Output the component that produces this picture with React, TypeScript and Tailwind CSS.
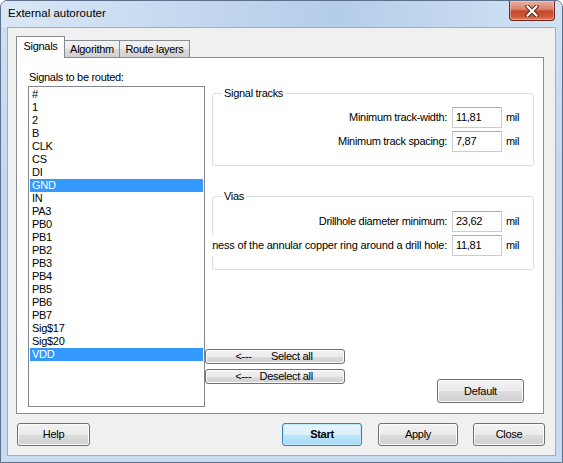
import React from "react";

const signals = [
  "#", "1", "2", "B", "CLK", "CS", "DI", "GND", "IN", "PA3", "PB0", "PB1", "PB2",
  "PB3", "PB4", "PB5", "PB6", "PB7", "Sig$17", "Sig$20", "VDD",
];
const selected = new Set(["GND", "VDD"]);

const btn =
  "flex items-center justify-center rounded-[3px] border border-[#707070] bg-[linear-gradient(#f2f2f2_0%,#ebebeb_50%,#dddddd_50%,#cfcfcf_100%)] shadow-[inset_0_0_0_1px_#fcfcfc] text-black";

function Field({ label, value, clip }: { label: string; value: string; clip?: boolean }) {
  return (
    <div className={`flex items-center h-[21px] ${clip ? "-ml-[1px]" : ""}`}>
      <div
        className={`flex-1 min-w-0 h-[21px] flex items-center justify-end overflow-hidden whitespace-nowrap pr-[5px] ${clip ? "relative bg-white" : ""}`}
      >
        <span className={`shrink-0 ${clip ? "tracking-[-0.2px]" : ""}`}>{label}</span>
      </div>
      <div className="w-[50px] h-[21px] border border-[#c9ccd3] border-t-[#abadb3] bg-white flex items-center pl-[3px]">
        {value}
      </div>
      <div className="w-[31px] pl-[4px]">mil</div>
    </div>
  );
}

function Group({ title, children, pt }: { title: string; children: React.ReactNode; pt: string }) {
  return (
    <div className={`relative ml-[7px] w-[322px] border border-[#d5dfe5] rounded-[3px] ${pt} pb-[13px] flex flex-col gap-[3px]`}>
      <span className="absolute left-[9px] -top-[7px] bg-white px-[2px] leading-[13px]">{title}</span>
      {children}
    </div>
  );
}

export default function App() {
  return (
    <div className="w-[563px] h-[463px] relative overflow-hidden rounded-t-[7px] border border-[#5d7089] bg-[linear-gradient(180deg,#cfe0f3_0%,#c3d7ee_40%,#c8dbf0_100%)] flex flex-col font-['Liberation_Sans',Arial,sans-serif] text-[11px] tracking-[-0.3px] text-black">
      {/* Title bar */}
      <div className="h-[26px] shrink-0 flex items-center pl-[7px] pb-[1px] bg-[linear-gradient(90deg,#dae7f6_0%,#c6daf0_30%,#b4cde9_60%,#c7dbf0_85%,#d2e2f4_100%)]">
        <span className="text-[11.5px] tracking-normal text-black">External autorouter</span>
      </div>
      <div className="absolute top-0 right-[7px] w-[46px] h-[20px] rounded-b-[4px] border border-t-0 border-[#6b2618] bg-[linear-gradient(180deg,#eab0a2_0%,#dc8670_40%,#c44a2f_55%,#cf5634_80%,#e0805c_100%)] shadow-[inset_0_0_0_1px_rgba(255,220,210,0.45)] flex items-center justify-center">
        <svg width="14" height="12" viewBox="0 0 14 12">
          <path d="M2.5 1.5 L11.5 10.5 M11.5 1.5 L2.5 10.5" stroke="#5a1c12" strokeWidth="4" strokeLinecap="square" />
          <path d="M2.5 1.5 L11.5 10.5 M11.5 1.5 L2.5 10.5" stroke="#ffffff" strokeWidth="2.2" strokeLinecap="square" />
        </svg>
      </div>

      {/* Client area */}
      <div className="ml-[6px] w-[549px] h-[429px] border border-[#9aaec6] bg-[#f0f0f0] flex flex-col">
        {/* Tabs */}
        <div className="ml-[8px] mt-[8px] h-[21px] flex items-end">
          <div className="relative z-10 w-[49px] h-[22px] -mb-[1px] border border-b-0 border-[#898c95] bg-white flex items-center justify-center pb-[2px]">
            Signals
          </div>
          <div className="w-[55px] h-[17px] border border-b-0 border-l-0 border-[#898c95] bg-[linear-gradient(#f2f2f2_0%,#ebebeb_50%,#dddddd_50%,#cfcfcf_100%)] flex items-center justify-center">
            Algorithm
          </div>
          <div className="w-[70px] h-[17px] border border-b-0 border-l-0 border-[#898c95] bg-[linear-gradient(#f2f2f2_0%,#ebebeb_50%,#dddddd_50%,#cfcfcf_100%)] flex items-center justify-center">
            Route layers
          </div>
        </div>

        {/* Panel */}
        <div className="ml-[8px] w-[528px] h-[357px] border border-[#898c95] bg-white flex">
          {/* Left column */}
          <div className="ml-[11px] mt-[12px] flex flex-col">
            <div className="h-[14px] leading-[14px] pl-[1px]">Signals to be routed:</div>
            <div className="mt-[2px] w-[177px] h-[321px] border border-[#828790] bg-white p-[1px]">
              {signals.map((s) => (
                <div
                  key={s}
                  className={`h-[13px] leading-[13px] pl-[2px] ${selected.has(s) ? "bg-[#3399ff] text-white" : ""}`}
                >
                  {s}
                </div>
              ))}
            </div>
          </div>

          {/* Right column */}
          <div className="flex-1 flex flex-col">
            <div className="mt-[35px]">
              <Group title="Signal tracks" pt="pt-[13px]">
                <Field label="Minimum track-width:" value="11,81" />
                <Field label="Minimum track spacing:" value="7,87" />
              </Group>
            </div>
            <div className="mt-[30px]">
              <Group title="Vias" pt="pt-[14px]">
                <Field label="Drillhole diameter minimum:" value="23,62" />
                <Field
                  label="Minimum thickness of the annular copper ring around a drill hole:"
                  value="11,81"
                  clip
                />
              </Group>
            </div>
            <div className={`${btn} mt-[79px] w-[140px] h-[15px] whitespace-pre pr-[2px]`}>
              {"<---       Select all"}
            </div>
            <div className="mt-[5px] flex items-start">
              <div className={`${btn} w-[140px] h-[15px] whitespace-pre pr-[2px]`}>{"<---   Deselect all"}</div>
              <div className={`${btn} ml-auto mr-[19px] mt-[10px] w-[87px] h-[24px]`}>Default</div>
            </div>
          </div>
        </div>

        {/* Bottom buttons */}
        <div className="mt-[9px] h-[23px] flex items-center">
          <div className={`${btn} ml-[9px] w-[73px] h-[23px]`}>Help</div>
          <div className="ml-auto mr-[10px] flex gap-[15px]">
            <div className="flex gap-[16px]">
              <div className="w-[80px] h-[23px] rounded-[3px] border border-[#3c7fb1] bg-[linear-gradient(#eaf6fd_0%,#d9f0fc_50%,#bee6fd_50%,#a7d9f5_100%)] shadow-[inset_0_0_0_1px_#bfeafd] flex items-center justify-center font-bold">
                Start
              </div>
              <div className={`${btn} w-[80px] h-[23px]`}>Apply</div>
            </div>
            <div className={`${btn} w-[72px] h-[23px]`}>Close</div>
          </div>
        </div>
      </div>
    </div>
  );
}
